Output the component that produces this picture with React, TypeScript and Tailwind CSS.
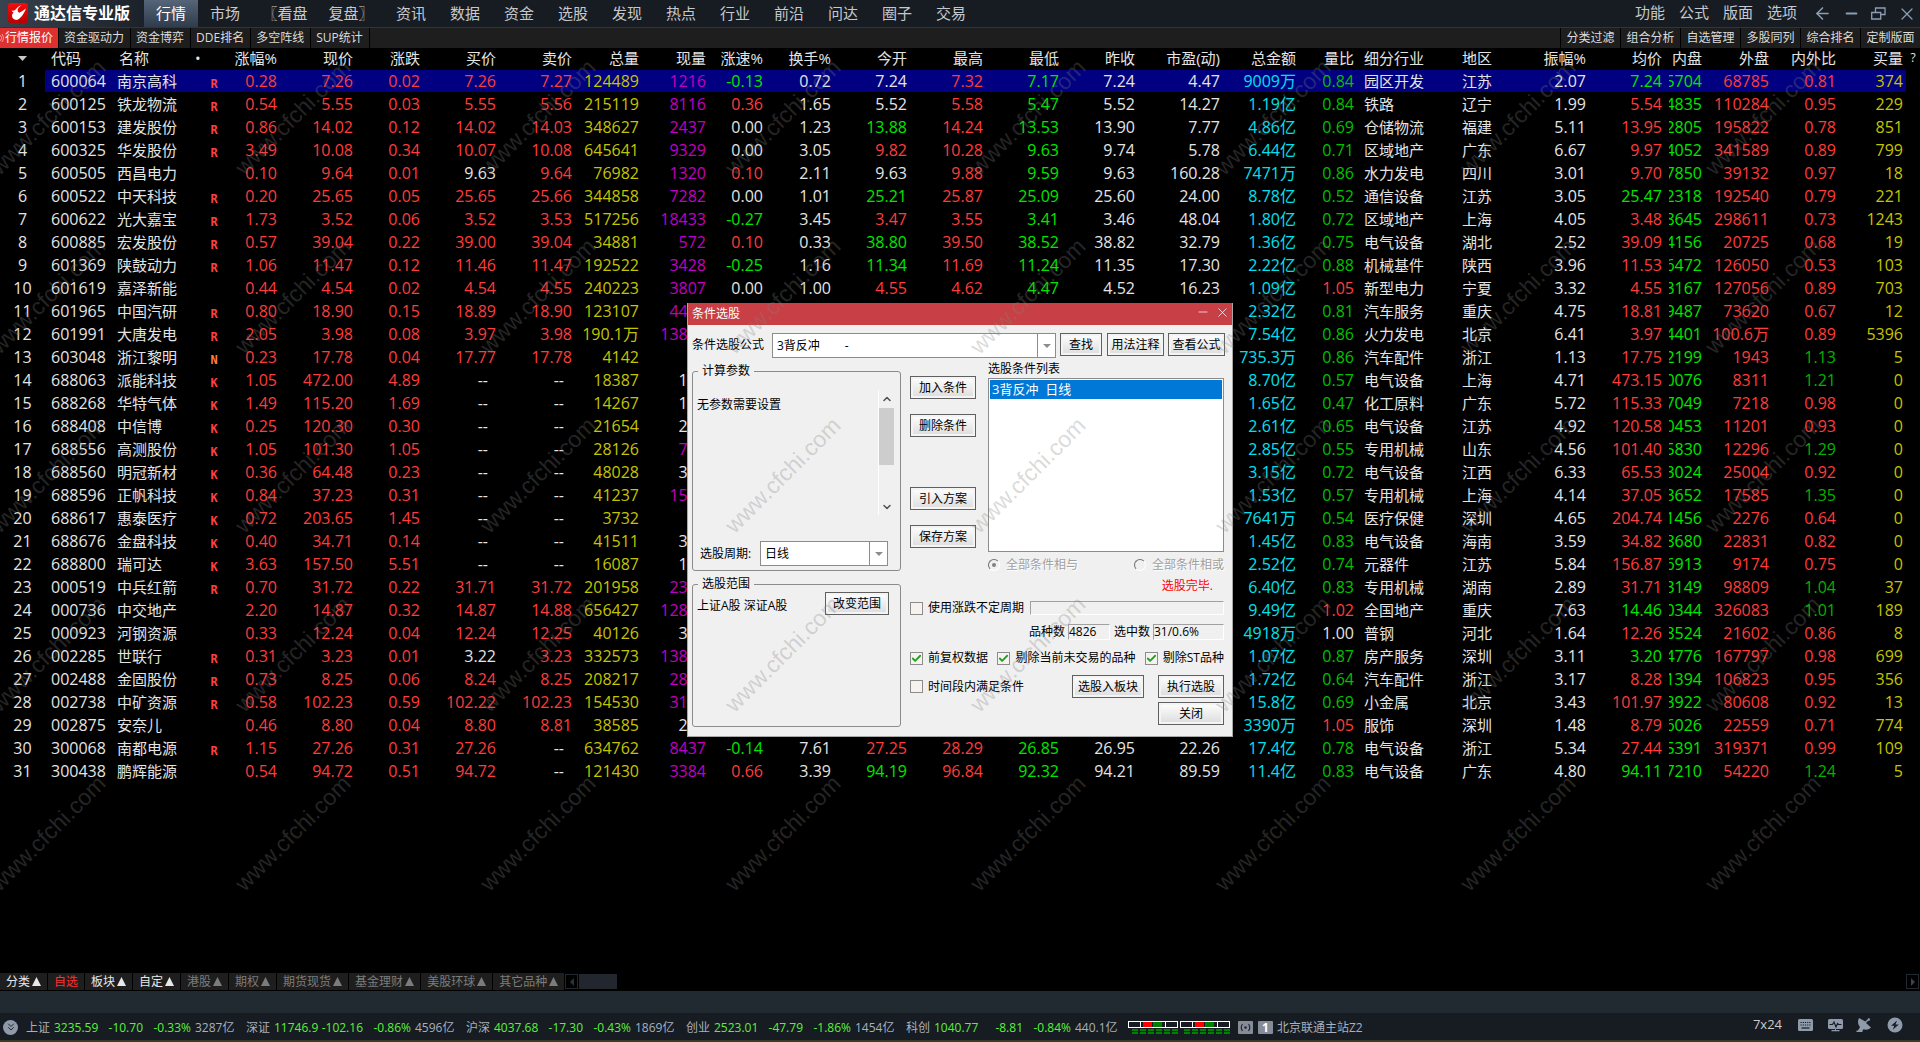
import { clsx } from "clsx";
import { ArrowLeft, Check, ChevronDown, ChevronUp, ChevronsDown, Minus, X } from "lucide-react";
import type { ReactNode } from "react";

const menus = ["行情", "市场", "〖看盘", "复盘〗", "资讯", "数据", "资金", "选股", "发现", "热点", "行业", "前沿", "问达", "圈子", "交易"];
const systemMenus = ["功能", "公式", "版面", "选项"];
const leftTabs = ["行情报价", "资金驱动力", "资金博弈", "DDE排名", "多空阵线", "SUP统计"];
const rightTabs = ["分类过滤", "组合分析", "自选管理", "多股同列", "综合排名", "定制版面"];

const columns = [
  { title: "", width: 45 },
  { title: "代码", width: 68 },
  { title: "名称", width: 82 },
  { title: "•", width: 34 },
  { title: "涨幅%", width: 48 },
  { title: "现价", width: 76 },
  { title: "涨跌", width: 67 },
  { title: "买价", width: 76 },
  { title: "卖价", width: 76 },
  { title: "总量", width: 67 },
  { title: "现量", width: 67 },
  { title: "涨速%", width: 57 },
  { title: "换手%", width: 68 },
  { title: "今开", width: 76 },
  { title: "最高", width: 76 },
  { title: "最低", width: 76 },
  { title: "昨收", width: 76 },
  { title: "市盈(动)", width: 85 },
  { title: "总金额", width: 76 },
  { title: "量比", width: 58 },
  { title: "细分行业", width: 98 },
  { title: "地区", width: 68 },
  { title: "振幅%", width: 66 },
  { title: "均价", width: 76 },
  { title: "内盘", width: 40 },
  { title: "外盘", width: 67 },
  { title: "内外比", width: 67 },
  { title: "买量", width: 70 },
  { title: "?", width: 14 },
];

// same order as the columns, without the row number
const quotes = [
  "600064|南京高科|R|0.28|7.26|0.02|7.26|7.27|124489|1216|-0.13|0.72|7.24|7.32|7.17|7.24|4.47|9009万|0.84|园区开发|江苏|2.07|7.24|5704|68785|0.81|374",
  "600125|铁龙物流|R|0.54|5.55|0.03|5.55|5.56|215119|8116|0.36|1.65|5.52|5.58|5.47|5.52|14.27|1.19亿|0.84|铁路|辽宁|1.99|5.54|4835|110284|0.95|229",
  "600153|建发股份|R|0.86|14.02|0.12|14.02|14.03|348627|2437|0.00|1.23|13.88|14.24|13.53|13.90|7.77|4.86亿|0.69|仓储物流|福建|5.11|13.95|2805|195822|0.78|851",
  "600325|华发股份|R|3.49|10.08|0.34|10.07|10.08|645641|9329|0.00|3.05|9.82|10.28|9.63|9.74|5.78|6.44亿|0.71|区域地产|广东|6.67|9.97|4052|341589|0.89|799",
  "600505|西昌电力||0.10|9.64|0.01|9.63|9.64|76982|1320|0.10|2.11|9.63|9.88|9.59|9.63|160.28|7471万|0.86|水力发电|四川|3.01|9.70|7850|39132|0.97|18",
  "600522|中天科技|R|0.20|25.65|0.05|25.65|25.66|344858|7282|0.00|1.01|25.21|25.87|25.09|25.60|24.00|8.78亿|0.52|通信设备|江苏|3.05|25.47|2318|192540|0.79|221",
  "600622|光大嘉宝|R|1.73|3.52|0.06|3.52|3.53|517256|18433|-0.27|3.45|3.47|3.55|3.41|3.46|48.04|1.80亿|0.72|区域地产|上海|4.05|3.48|8645|298611|0.73|1243",
  "600885|宏发股份|R|0.57|39.04|0.22|39.00|39.04|34881|572|0.10|0.33|38.80|39.50|38.52|38.82|32.79|1.36亿|0.75|电气设备|湖北|2.52|39.09|4156|20725|0.68|19",
  "601369|陕鼓动力|R|1.06|11.47|0.12|11.46|11.47|192522|3428|-0.25|1.16|11.34|11.69|11.24|11.35|17.30|2.22亿|0.88|机械基件|陕西|3.96|11.53|6472|126050|0.53|103",
  "601619|嘉泽新能||0.44|4.54|0.02|4.54|4.55|240223|3807|0.00|1.00|4.55|4.62|4.47|4.52|16.23|1.09亿|1.05|新型电力|宁夏|3.32|4.55|3167|127056|0.89|703",
  "601965|中国汽研|R|0.80|18.90|0.15|18.89|18.90|123107|4410||||||||2.32亿|0.81|汽车服务|重庆|4.75|18.81|9487|73620|0.67|12",
  "601991|大唐发电|R|2.05|3.98|0.08|3.97|3.98|190.1万|13820||||||||7.54亿|0.86|火力发电|北京|6.41|3.97|4401|100.6万|0.89|5396",
  "603048|浙江黎明|N|0.23|17.78|0.04|17.77|17.78|4142|||||||||735.3万|0.86|汽车配件|浙江|1.13|17.75|2199|1943|1.13|5",
  "688063|派能科技|K|1.05|472.00|4.89|--|--|18387|120||||||||8.70亿|0.57|电气设备|上海|4.71|473.15|0076|8311|1.21|0",
  "688268|华特气体|K|1.49|115.20|1.69|--|--|14267|110||||||||1.65亿|0.47|化工原料|广东|5.72|115.33|7049|7218|0.98|0",
  "688408|中信博|K|0.25|120.30|0.30|--|--|21654|210||||||||2.61亿|0.65|电气设备|江苏|4.92|120.58|0453|11201|0.93|0",
  "688556|高测股份|K|1.05|101.30|1.05|--|--|28126|710||||||||2.85亿|0.55|专用机械|山东|4.56|101.40|5830|12296|1.29|0",
  "688560|明冠新材|K|0.36|64.48|0.23|--|--|48028|320||||||||3.15亿|0.72|电气设备|江西|6.33|65.53|3024|25004|0.92|0",
  "688596|正帆科技|K|0.84|37.23|0.31|--|--|41237|1510||||||||1.53亿|0.57|专用机械|上海|4.14|37.05|3652|17585|1.35|0",
  "688617|惠泰医疗|K|0.72|203.65|1.45|--|--|3732|||||||||7641万|0.54|医疗保健|深圳|4.65|204.74|1456|2276|0.64|0",
  "688676|金盘科技|K|0.40|34.71|0.14|--|--|41511|320||||||||1.45亿|0.83|电气设备|海南|3.59|34.82|8680|22831|0.82|0",
  "688800|瑞可达|K|3.63|157.50|5.51|--|--|16087|120||||||||2.52亿|0.74|元器件|江苏|5.84|156.87|6913|9174|0.75|0",
  "000519|中兵红箭|R|0.70|31.72|0.22|31.71|31.72|201958|2310||||||||6.40亿|0.83|专用机械|湖南|2.89|31.71|3149|98809|1.04|37",
  "000736|中交地产||2.20|14.87|0.32|14.87|14.88|656427|12810||||||||9.49亿|1.02|全国地产|重庆|7.63|14.46|0344|326083|1.01|189",
  "000923|河钢资源||0.33|12.24|0.04|12.24|12.25|40126|310||||||||4918万|1.00|普钢|河北|1.64|12.26|8524|21602|0.86|8",
  "002285|世联行|R|0.31|3.23|0.01|3.22|3.23|332573|13810||||||||1.07亿|0.87|房产服务|深圳|3.11|3.20|4776|167797|0.98|699",
  "002488|金固股份|R|0.73|8.25|0.06|8.24|8.25|208217|2810||||||||1.72亿|0.64|汽车配件|浙江|3.17|8.28|1394|106823|0.95|356",
  "002738|中矿资源|R|0.58|102.23|0.59|102.22|102.23|154530|3110||||||||15.8亿|0.69|小金属|北京|3.43|101.97|3922|80608|0.92|13",
  "002875|安奈儿||0.46|8.80|0.04|8.80|8.81|38585|210||||||||3390万|1.05|服饰|深圳|1.48|8.79|6026|22559|0.71|774",
  "300068|南都电源|R|1.15|27.26|0.31|27.26|--|634762|8437|-0.14|7.61|27.25|28.29|26.85|26.95|22.26|17.4亿|0.78|电气设备|浙江|5.34|27.44|5391|319371|0.99|109",
  "300438|鹏辉能源||0.54|94.72|0.51|94.72|--|121430|3384|0.66|3.39|94.19|96.84|92.32|94.21|89.59|11.4亿|0.83|电气设备|广东|4.80|94.11|7210|54220|1.24|5",
].map((line) => line.split("|"));

const RED = "text-[#ff3c3c]";
const GREEN = "text-[#00e600]";
const WHITE = "text-[#e4e4e4]";
const YELLOW = "text-[#c4c400]";

function compare(value: string, base: number) {
  const n = Number(value);
  if (Number.isNaN(n) || Math.abs(n - base) < 0.001) return WHITE;
  return n > base ? RED : GREEN;
}

function QuoteRow({ cells, index }: { cells: string[]; index: number }) {
  const [code, name, mark, pct, price, change, bid, ask, volume, last, speed, turnover, open, high, low, prev, pe, amount, ratio, industry, area, range, avg, inner, outer, inOut, bidVolume] = cells;
  const close = Number(price) - Number(change);
  const bg = index === 0 ? "bg-[#000080]" : "";
  const avgColor = Number(avg) - close > 0.001 ? RED : GREEN;
  const ratioColor = Number(ratio) > 1 ? RED : Number(ratio) < 1 ? "text-[#00c000]" : WHITE;

  const num = (text: string, color: string) => (
    <td className={clsx("h-[23px] border-b border-black text-right", text === "--" && "pr-2", bg, color)}>{text}</td>
  );

  return (
    <tr>
      <td className={clsx("h-[23px] border-b border-black text-center", WHITE)}>{index + 1}</td>
      <td className={clsx("border-b border-black pl-[6px]", bg, WHITE)}>{code}</td>
      <td className={clsx("border-b border-black pl-1 text-[15px]", bg, WHITE)}>{name}</td>
      <td className={clsx("border-b border-black pt-[6px] pl-1 text-center font-['DejaVu_Sans_Mono',monospace] text-[12px] leading-3 font-bold", bg, mark === "N" ? "text-[#ff7f40]" : "text-[#ff4040]")}>
        {mark}
      </td>
      {num(pct, RED)}
      {num(price, RED)}
      {num(change, RED)}
      {num(bid, compare(bid, close))}
      {num(ask, compare(ask, close))}
      {num(volume, YELLOW)}
      {num(last, Number(last) >= 500 ? "text-[#c000c0]" : WHITE)}
      {num(speed, compare(speed, 0))}
      {num(turnover, WHITE)}
      {num(open, compare(open, close))}
      {num(high, compare(high, close))}
      {num(low, compare(low, close))}
      {num(prev, WHITE)}
      {num(pe, WHITE)}
      {num(amount, "text-[#00e0f0]")}
      {num(ratio, ratioColor)}
      <td className={clsx("border-b border-black pl-[10px] text-[15px]", bg, WHITE)}>{industry}</td>
      <td className={clsx("border-b border-black pl-[10px] text-[15px]", bg, WHITE)}>{area}</td>
      {num(range, WHITE)}
      {num(avg, avgColor)}
      <td className={clsx("border-b border-black pl-[7px]", bg, GREEN)}>
        <div className="flex justify-end overflow-hidden">{inner}</div>
      </td>
      {num(outer, RED)}
      {num(inOut, Number(inOut) > 1 ? "text-[#00b400]" : RED)}
      <td className={clsx("border-b border-black pr-[3px] text-right", bg, YELLOW)}>{bidVolume}</td>
      <td />
    </tr>
  );
}

function QuoteTable() {
  return (
    <table className="w-full table-fixed border-separate border-spacing-0 text-[16px] leading-[22px] whitespace-nowrap">
      <colgroup>
        {columns.map((c, i) => (
          <col key={i} style={{ width: c.width }} />
        ))}
      </colgroup>
      <thead>
        <tr className={clsx("text-[15px] leading-5", WHITE)}>
          {columns.map((c, i) => (
            <th
              key={i}
              className={clsx(
                "h-[22px] p-0 pb-[2px] font-normal",
                i === 0 && "text-center",
                i === 1 && "pl-[6px] text-left",
                i === 2 && "pl-[6px] text-left",
                i === 3 && "text-left",
                (i === 20 || i === 21) && "pl-[10px] text-left",
                i === 27 && "pr-[3px] text-right",
                i === 28 && "text-center text-[12px]",
                i > 3 && i !== 20 && i !== 21 && i < 27 && "text-right",
              )}
            >
              {i === 0 ? (
                <svg className="mx-auto" width="9" height="5" viewBox="0 0 9 5">
                  <path d="M0 0h9L4.500 5z" fill="#c8c8c8" />
                </svg>
              ) : (
                c.title
              )}
            </th>
          ))}
        </tr>
      </thead>
      <tbody>
        {quotes.map((cells, i) => (
          <QuoteRow key={cells[0]} cells={cells} index={i} />
        ))}
      </tbody>
    </table>
  );
}

function Logo() {
  return (
    <svg width="20" height="20" viewBox="0 0 20 20">
      <defs>
        <linearGradient id="logo" x1="0" y1="0" x2="0" y2="1">
          <stop offset="0" stopColor="#f50d0d" />
          <stop offset="1" stopColor="#b80000" />
        </linearGradient>
      </defs>
      <rect width="20" height="20" rx="3" fill="url(#logo)" />
      <path d="M13.500 2C11 4 9.500 5.500 9.700 7.600c.1 1 .7 1.700 1.400 2.200C13 8.800 15.500 7.500 18 5.200c-1.500 4.500-4.500 9.500-8.500 11.600-3 .6-5.500-1.300-5.500-4 0-1.500.7-2.600 1.700-3.400-.9-.2-1.700-.8-2.200-1.900 1.300.5 2.600.3 3.600-.5C8.500 5.500 10.500 3 13.500 2z" fill="#fff" />
    </svg>
  );
}

function TopBar() {
  return (
    <header className="flex h-7 shrink-0 border-b border-[#2c3541] bg-[#171c23]">
      <div className="flex w-36 shrink-0 items-center gap-[6px] bg-linear-to-r from-[#39424f] to-[#1b2129] pb-[2px] pl-2">
        <Logo />
        <h1 className="text-[16px] leading-5 font-bold whitespace-nowrap text-white">通达信专业版</h1>
      </div>
      <nav className="flex text-[15px] whitespace-nowrap text-[#c5c9ce]">
        {menus.map((m, i) => (
          <button
            key={m}
            className={clsx(
              "h-[27px] text-center",
              i === 2 || i === 3 ? "w-[66px]" : "w-[54px]",
              i === 0 && "bg-linear-to-b from-[#566579] to-[#2f3c4b] text-white",
            )}
          >
            {m}
          </button>
        ))}
      </nav>
      <div className="ml-auto flex items-center text-[15px] text-[#c5c9ce]">
        {systemMenus.map((m) => (
          <button key={m} className="w-11 pb-[2px] text-center">
            {m}
          </button>
        ))}
        <div className="flex items-center gap-[11px] pr-[3px] pl-[9px] text-[#8d9db6]">
          <button aria-label="后退"><ArrowLeft size={19} strokeWidth={2} /></button>
          <button aria-label="最小化"><Minus size={17} strokeWidth={2.5} /></button>
          <button aria-label="还原">
            <svg width="15" height="13" viewBox="0 0 15 13" fill="none" stroke="currentColor" strokeWidth="1.300">
              <path d="M.7 5.500h9v6.500h-9zM4.500 5V1h9.500v6.500h-4" />
            </svg>
          </button>
          <button aria-label="关闭窗口"><X size={20} strokeWidth={1.5} /></button>
        </div>
      </div>
    </header>
  );
}

function TabBar() {
  return (
    <div className="flex h-5 shrink-0 justify-between bg-[#1e1e1e] text-[12px] whitespace-nowrap text-[#dcdcdc]">
      <div className="flex">
        {leftTabs.map((t, i) => (
          <button
            key={t}
            className={clsx(
              "h-5 border-r border-black",
              i === 0 ? "flex items-center bg-[#de3030] pr-[5px] text-white" : "pr-[6px] pl-[5px]",
            )}
          >
            {i === 0 && (
              <svg className="mr-px" width="4" height="8" viewBox="0 0 4 8" fill="none" stroke="#f09a9a">
                <path d="M0 1l2 3-2 3M2 0l2 4-2 4" />
              </svg>
            )}
            {t}
          </button>
        ))}
      </div>
      <div className="flex">
        {rightTabs.map((t) => (
          <button key={t} className="h-5 w-[60px] border-l border-black text-center">
            {t}
          </button>
        ))}
      </div>
    </div>
  );
}

function DialogButton({ children, className }: { children: ReactNode; className: string }) {
  return (
    <button
      className={clsx(
        "flex h-[23px] shrink-0 items-center justify-center border border-[#606060] bg-linear-to-b from-white to-[#dcdcdc] whitespace-nowrap shadow-[inset_0_0_0_2px_#f4f4f4]",
        className,
      )}
    >
      {children}
    </button>
  );
}

function Combo({ id, value, className }: { id: string; value: string; className: string }) {
  return (
    <div className={clsx("flex h-[25px] shrink-0 border border-[#8c8c8c] bg-white", className)}>
      <select id={id} className="min-w-0 flex-1 appearance-none bg-white pl-1 outline-none">
        <option>{value}</option>
      </select>
      <span className="flex w-[18px] items-center justify-center border-l border-[#8c8c8c]">
        <svg width="8" height="4" viewBox="0 0 8 4">
          <path d="M0 0h8L4 4z" fill="#8c8c8c" />
        </svg>
      </span>
    </div>
  );
}

function Tick({ label, checked }: { label: string; checked?: boolean }) {
  return (
    <label className="flex h-4 shrink-0 items-center gap-[5px] whitespace-nowrap">
      <span className="grid size-[13px] place-items-center">
        <input
          type="checkbox"
          defaultChecked={checked}
          className="col-start-1 row-start-1 size-[13px] appearance-none border border-[#8c8c8c] bg-[#f6f3ef]"
        />
        {checked && <Check size={11} strokeWidth={4} className="pointer-events-none col-start-1 row-start-1 text-[#22a022]" />}
      </span>
      {label}
    </label>
  );
}

function Join({ label, checked }: { label: string; checked?: boolean }) {
  return (
    <label className="flex items-center gap-[6px]">
      <span className="grid size-3 place-items-center">
        <input
          type="radio"
          name="join"
          disabled
          defaultChecked={checked}
          className="col-start-1 row-start-1 size-3 appearance-none rounded-full border border-t-[#707070] border-r-white border-b-white border-l-[#707070]"
        />
        {checked && <span className="col-start-1 row-start-1 size-1 rounded-full bg-[#808080]" />}
      </span>
      {label}
    </label>
  );
}

const sunken = "border-t border-r border-b border-l border-t-[#a0a0a0] border-r-white border-b-white border-l-[#a0a0a0] bg-[#f0f0f0]";

function FilterDialog() {
  return (
    <section
      role="dialog"
      aria-label="条件选股"
      className="absolute top-[303px] left-[687px] w-[546px] border border-t-0 border-[#a8a8a8] bg-[#f0f0f0] text-[12px] leading-4 text-black"
    >
      <div className="flex h-[22px] items-center bg-[#c84045] pl-1 text-white">
        <span className="flex-1">条件选股</span>
        <button aria-label="最小化" className="mr-[5px] mb-1"><Minus size={14} strokeWidth={1.2} /></button>
        <button aria-label="关闭" className="mr-[2px] mb-1"><X size={15} strokeWidth={1.2} /></button>
      </div>

      <div className="flex pt-2 pl-1">
        <label htmlFor="formula" className="w-20 pt-1 whitespace-nowrap">条件选股公式</label>
        <Combo id="formula" value={"3背反冲\u00a0\u00a0\u00a0\u00a0\u00a0\u00a0\u00a0\u00a0-"} className="w-[284px]" />
        <DialogButton className="ml-1 w-[42px]">查找</DialogButton>
        <DialogButton className="ml-[5px] w-[57px]">用法注释</DialogButton>
        <DialogButton className="ml-1 w-[57px]">查看公式</DialogButton>
      </div>

      <div className="flex gap-[9px] pb-[9px] pl-1">
        <div className="w-[209px] shrink-0">
          <fieldset className="mt-[5px] h-[208px] rounded-[3px] border border-[#8c8c8c]">
            <legend className="ml-[5px] px-1">计算参数</legend>
            <div className="mt-[11px] flex h-[125px]">
              <p className="flex-1 pt-[7px] pl-1">无参数需要设置</p>
              <div className="mr-[6px] flex w-4 flex-col items-center border-l border-white text-[#505050]">
                <ChevronUp size={12} strokeWidth={3} className="my-[3px] shrink-0" />
                <div className="h-[57px] w-[15px] bg-[#cdcdcd]" />
                <ChevronDown size={12} strokeWidth={3} className="mt-auto mb-[2px] shrink-0" />
              </div>
            </div>
            <div className="mt-[26px] flex items-center pl-[7px]">
              <label htmlFor="period" className="w-[60px]">选股周期:</label>
              <Combo id="period" value="日线" className="w-32" />
            </div>
          </fieldset>
          <fieldset className="mt-[5px] h-[151px] rounded-[3px] border border-[#8c8c8c]">
            <legend className="ml-[5px] px-1">选股范围</legend>
            <div className="flex items-start justify-between pr-[11px] pl-1">
              <p className="pt-[6px]">上证A股 深证A股</p>
              <DialogButton className="w-16">改变范围</DialogButton>
            </div>
          </fieldset>
        </div>

        <div className="w-[314px] shrink-0">
          <div className="flex gap-3">
            <div className="flex w-[66px] flex-col gap-[15px] pt-[18px]">
              <DialogButton className="w-[66px]">加入条件</DialogButton>
              <DialogButton className="w-[66px]">删除条件</DialogButton>
              <DialogButton className="mt-[35px] w-[66px]">引入方案</DialogButton>
              <DialogButton className="w-[66px]">保存方案</DialogButton>
            </div>
            <div className="flex-1 pt-[3px]">
              <p id="conditions">选股条件列表</p>
              <ul role="listbox" aria-labelledby="conditions" className="mt-px h-[174px] border border-[#8c8c8c] bg-white p-px">
                <li role="option" aria-selected="true" className="h-[19px] bg-[#0078d7] pl-[2px] text-[13px] leading-[18px] whitespace-pre text-white">
                  {"3背反冲  日线"}
                </li>
              </ul>
              <div className="mt-[5px] flex justify-between text-[#a0a0a0] [text-shadow:1px_1px_#fff]">
                <Join label="全部条件相与" checked />
                <Join label="全部条件相或" />
              </div>
              <p className="mt-[5px] pr-[11px] text-right text-[#ff0000]">选股完毕.</p>
            </div>
          </div>

          <div className="mt-[6px] flex items-center gap-[6px]">
            <Tick label="使用涨跌不定周期" />
            <input aria-label="不定周期" readOnly className={clsx("h-[14px] min-w-0 flex-1", sunken)} />
          </div>
          <div className="mt-2 flex h-4 items-center justify-end gap-[3px]">
            <label htmlFor="total">品种数</label>
            <input id="total" readOnly value="4826" className={clsx("h-4 w-[42px]", sunken)} />
            <label htmlFor="picked" className="ml-px">选中数</label>
            <input id="picked" readOnly value="31/0.6%" className={clsx("h-4 w-[71px]", sunken)} />
          </div>
          <div className="mt-[10px] flex justify-between">
            <Tick label="前复权数据" checked />
            <Tick label="剔除当前未交易的品种" checked />
            <Tick label="剔除ST品种" checked />
          </div>
          <div className="mt-[9px] flex items-center">
            <Tick label="时间段内满足条件" />
            <DialogButton className="ml-auto w-[72px]">选股入板块</DialogButton>
            <DialogButton className="ml-[14px] w-[66px]">执行选股</DialogButton>
          </div>
          <div className="mt-1 flex justify-end">
            <DialogButton className="w-[66px]">关闭</DialogButton>
          </div>
        </div>
      </div>
    </section>
  );
}

const markets = [
  { label: "分类", arrow: true, color: "text-[#e8e8e8]" },
  { label: "自选", arrow: false, color: "text-[#ff3030]" },
  { label: "板块", arrow: true, color: "text-[#e8e8e8]" },
  { label: "自定", arrow: true, color: "text-[#e8e8e8]" },
  { label: "港股", arrow: true, color: "text-[#7c7c7c]" },
  { label: "期权", arrow: true, color: "text-[#7c7c7c]" },
  { label: "期货现货", arrow: true, color: "text-[#7c7c7c]" },
  { label: "基金理财", arrow: true, color: "text-[#7c7c7c]" },
  { label: "美股环球", arrow: true, color: "text-[#7c7c7c]" },
  { label: "其它品种", arrow: true, color: "text-[#7c7c7c]" },
];

function MarketTabs() {
  return (
    <div className="flex h-[18px] shrink-0 gap-px text-[12px] leading-[17px] whitespace-nowrap">
      {markets.map((m) => (
        <button key={m.label} className={clsx("flex h-[17px] items-center gap-[2px] bg-[#1e1e1e] pr-[6px] pl-[6px]", m.color)}>
          {m.label}
          {m.arrow && (
            <svg width="9" height="9" viewBox="0 0 9 9">
              <path d="M4.500 0L9 9H0z" fill="currentColor" />
            </svg>
          )}
        </button>
      ))}
      <button aria-label="向左" className="mt-px flex h-[15px] w-[13px] items-center justify-center border border-[#22282f]">
        <svg width="4" height="8" viewBox="0 0 4 8"><path d="M4 0v8L0 4z" fill="#2c333b" /></svg>
      </button>
      <div className="mt-px h-[15px] w-[38px] bg-[#22272f]" />
      <button aria-label="向右" className="mt-px mr-px ml-auto flex h-[15px] w-[13px] items-center justify-center border border-[#22282f]">
        <svg width="4" height="8" viewBox="0 0 4 8"><path d="M0 0v8l4-4z" fill="#3a424b" /></svg>
      </button>
    </div>
  );
}

const indices = [
  ["上证", "3235.59", "-10.70", "-0.33%", "3287亿"],
  ["深证", "11746.9", "-102.16", "-0.86%", "4596亿"],
  ["沪深", "4037.68", "-17.30", "-0.43%", "1869亿"],
  ["创业", "2523.01", "-47.79", "-1.86%", "1454亿"],
  ["科创", "1040.77", "-8.81", "-0.84%", "440.1亿"],
];

function Meter() {
  return (
    <svg width="50" height="13" viewBox="0 0 50 13" shapeRendering="crispEdges">
      <rect x="0.500" y="0.500" width="49" height="6" fill="#171c23" stroke="#fff" />
      <rect x="12" y="0" width="1" height="7" fill="#fff" />
      <rect x="37" y="0" width="1" height="7" fill="#fff" />
      <rect x="15" y="1" width="9" height="5" fill="#ff0000" />
      <rect x="25" y="1" width="9" height="5" fill="#008000" />
      {[4, 12, 20, 28, 36, 44].map((x) => (
        <g key={x} fill="#008000">
          <rect x={x} y="8" width="6" height="2" />
          <rect x={x} y="11" width="6" height="2" />
        </g>
      ))}
    </svg>
  );
}

function StatusBar() {
  return (
    <footer className="flex h-[27px] shrink-0 items-center bg-[#171c23] pt-px text-[12px] whitespace-nowrap text-[#a7b0bd]">
      <span className="ml-[3px] flex size-[15px] items-center justify-center rounded-full bg-[#8f99a8] text-[#20262e]">
        <ChevronsDown size={12} strokeWidth={2} />
      </span>
      <div className="ml-2 flex">
        {indices.map(([name, value, change, pct, amount]) => (
          <div key={name} className="grid w-[220px] grid-cols-[28px_46px_43px_48px_55px] pt-px">
            <span>{name}</span>
            <span className="text-[#5cf03c]">{value}</span>
            <span className="text-right text-[#5cf03c]">{change}</span>
            <span className="text-right text-[#5cf03c]">{pct}</span>
            <span className="pl-1">{amount}</span>
          </div>
        ))}
      </div>
      <div className="ml-[2px] flex items-center gap-[2px]">
        <Meter />
        <Meter />
      </div>
      <svg className="ml-2" width="36" height="13" viewBox="0 0 36 13">
        <rect width="15" height="13" rx="1" fill="#858c98" />
        <path d="M4.500 3Q2 6.500 4.500 10M10.500 3Q13 6.500 10.500 10" fill="none" stroke="#232931" strokeWidth="1.200" />
        <circle cx="7.500" cy="6.500" r="1.300" fill="#232931" />
        <rect x="20" width="15" height="13" rx="1" fill="#858c98" />
        <text x="24" y="11" fontSize="12" fontWeight="700" fill="#fff">1</text>
      </svg>
      <span className="ml-[3px] pt-px">北京联通主站Z2</span>

      <div className="mr-4 mb-1 ml-auto flex items-center text-[#8f9bab]">
        <span className="mr-4 text-[13px] text-[#c8ccd0]">7x24</span>
        <svg width="106" height="16" viewBox="0 0 106 16" fill="currentColor">
          <rect x="0" y="2" width="15" height="12" rx="1.500" />
          <path d="M2.500 5.500h10M2.500 8h10" stroke="#171c23" strokeWidth="1.200" strokeDasharray="1.200 1" />
          <path d="M3.500 11h8" stroke="#171c23" strokeWidth="1.200" />
          <rect x="30" y="2" width="15" height="10" rx="1.500" />
          <path d="M37 12h1v1h3.500v1.200h-8V13H37z" />
          <path d="M31.500 7.500h3l1.500-2.500 2 5 1.500-3.500 1 1h3" fill="none" stroke="#171c23" strokeWidth="1.200" />
          <path d="M61 1c-1.500 3-1.300 6.500 1 9l-2 3.500h-1.500V15h6v-1.500l1-1.300c2.500 1 5 .5 7.500-1.700l-5-4.500 2-2.200c1 .4 2-.2 2-1.200C72 .8 69.700.8 69.700 2.300l-2.400 2.200z" />
          <circle cx="97" cy="8" r="7.500" />
          <path d="M99 3.500l-6 5.200h3.300l-1.500 4 6-5.200h-3.300z" fill="#171c23" />
        </svg>
      </div>
    </footer>
  );
}

function Watermark() {
  return (
    <div
      aria-hidden="true"
      className="pointer-events-none absolute top-7 left-[-74px] grid auto-rows-[179px] grid-cols-[repeat(8,245px)] place-items-center"
    >
      {Array.from({ length: 40 }, (_, i) => (
        <span key={i} className="-rotate-45 font-['Liberation_Sans',sans-serif] text-[23px] leading-none text-[#808080]/30">
          www.cfchi.com
        </span>
      ))}
    </div>
  );
}

export default function App() {
  return (
    <div className="relative flex h-screen flex-col overflow-hidden bg-black font-['Open_Sans','Noto_Sans_CJK_SC',sans-serif]">
      <TopBar />
      <TabBar />
      <main className="min-h-0 flex-1">
        <QuoteTable />
      </main>
      <MarketTabs />
      <div className="h-[22px] shrink-0 bg-[#222a31]" />
      <StatusBar />
      <div className="h-[2px] shrink-0 bg-[#383c26]" />
      <FilterDialog />
      <Watermark />
    </div>
  );
}
